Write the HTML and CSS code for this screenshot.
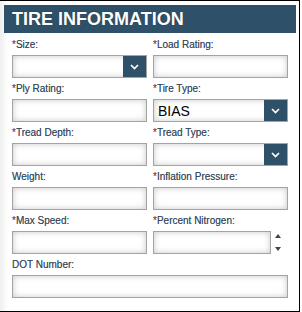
FILE: index.html
```html
<!DOCTYPE html>
<html lang="en">
<head>
  <meta charset="UTF-8">
  <title>Tire Information</title>
  <link rel="stylesheet" href="styles.css">
</head>
<body>
  <div class="panel">
    <h2 class="panel-title">TIRE INFORMATION</h2>

    <form class="form-grid">
      <div class="field">
        <label><span class="req">*</span>Size:</label>
        <div class="select">
          <span class="select-value"></span>
          <span class="select-btn"><svg width="9" height="6" viewBox="0 0 9 6"><path d="M1 1 L4.5 4.5 L8 1" fill="none" stroke="#fff" stroke-width="1.7"/></svg></span>
        </div>
      </div>
      <div class="field">
        <label><span class="req">*</span>Load Rating:</label>
        <input class="input" type="text">
      </div>

      <div class="field">
        <label><span class="req">*</span>Ply Rating:</label>
        <input class="input" type="text">
      </div>
      <div class="field">
        <label><span class="req">*</span>Tire Type:</label>
        <div class="select">
          <span class="select-value">BIAS</span>
          <span class="select-btn"><svg width="9" height="6" viewBox="0 0 9 6"><path d="M1 1 L4.5 4.5 L8 1" fill="none" stroke="#fff" stroke-width="1.7"/></svg></span>
        </div>
      </div>

      <div class="field">
        <label><span class="req">*</span>Tread Depth:</label>
        <input class="input" type="text">
      </div>
      <div class="field">
        <label><span class="req">*</span>Tread Type:</label>
        <div class="select">
          <span class="select-value"></span>
          <span class="select-btn"><svg width="9" height="6" viewBox="0 0 9 6"><path d="M1 1 L4.5 4.5 L8 1" fill="none" stroke="#fff" stroke-width="1.7"/></svg></span>
        </div>
      </div>

      <div class="field">
        <label>Weight:</label>
        <input class="input" type="text">
      </div>
      <div class="field">
        <label><span class="req">*</span>Inflation Pressure:</label>
        <input class="input" type="text">
      </div>

      <div class="field">
        <label><span class="req">*</span>Max Speed:</label>
        <input class="input" type="text">
      </div>
      <div class="field">
        <label><span class="req">*</span>Percent Nitrogen:</label>
        <div class="spin">
          <input class="input" type="text">
          <span class="spin-arrows">
            <svg width="6" height="4" viewBox="0 0 6 4"><path d="M0 4 L3 0 L6 4 Z" fill="#444"/></svg>
            <svg width="6" height="4" viewBox="0 0 6 4"><path d="M0 0 L3 4 L6 0 Z" fill="#444"/></svg>
          </span>
        </div>
      </div>

      <div class="field wide">
        <label>DOT Number:</label>
        <input class="input" type="text">
      </div>
    </form>
  </div>
</body>
</html>
```

FILE: styles.css
```css
body {
  margin: 0;
  font-family: "Liberation Sans", Arial, sans-serif;
  background: #fff;
}

.panel {
  width: 300px;
  height: 312px;
  box-sizing: border-box;
  border: 1px solid #000;
  border-left: none;
  padding: 4px 3px 0 4px;
  background: linear-gradient(to right, #efefef 0, #fff 8px);
}

.panel-title {
  margin: 0;
  height: 28px;
  line-height: 29px;
  padding-left: 8px;
  background: #2e5068;
  color: #fff;
  font-size: 18px;
  font-weight: bold;
  text-shadow: 0 0 1px rgba(0, 0, 0, 0.4);
}

/* form */
.form-grid {
  display: grid;
  grid-template-columns: 1fr 1fr;
  column-gap: 6px;
  row-gap: 4px;
  padding: 0 8px;
  margin-top: 5px;
}

.field {
  display: flex;
  flex-direction: column;
}

.field.wide {
  grid-column: 1 / 3;
}

.field label {
  height: 14px;
  line-height: 13px;
  margin-bottom: 3px;
  font-size: 10px;
  color: #34485a;
  text-shadow: 0 0 0.4px rgba(52, 72, 90, 0.6);
}

.req {
  color: #a33;
}

.input {
  box-sizing: border-box;
  width: 100%;
  height: 23px;
  margin: 0;
  border: 1px solid #a3a3a3;
  background: #fff;
  box-shadow: inset 0 0 6px rgba(0, 0, 0, 0.22);
  outline: none;
}

.select {
  box-sizing: border-box;
  display: flex;
  height: 23px;
  border: 1px solid #a3a3a3;
  background: #fff;
  box-shadow: inset 0 0 6px rgba(0, 0, 0, 0.22);
}

.select-value {
  flex: 1;
  padding-left: 4px;
  font-size: 14px;
  line-height: 22px;
  color: #000;
}

.select-btn {
  width: 23px;
  display: flex;
  align-items: center;
  justify-content: center;
  background: #2e5068;
}

.spin {
  display: flex;
  align-items: center;
}

.spin .input {
  width: 118px;
}

.spin-arrows {
  flex: 1;
  display: flex;
  flex-direction: column;
  align-items: center;
  gap: 9px;
  padding-right: 3px;
}

.spin-arrows svg {
  display: block;
}
```
